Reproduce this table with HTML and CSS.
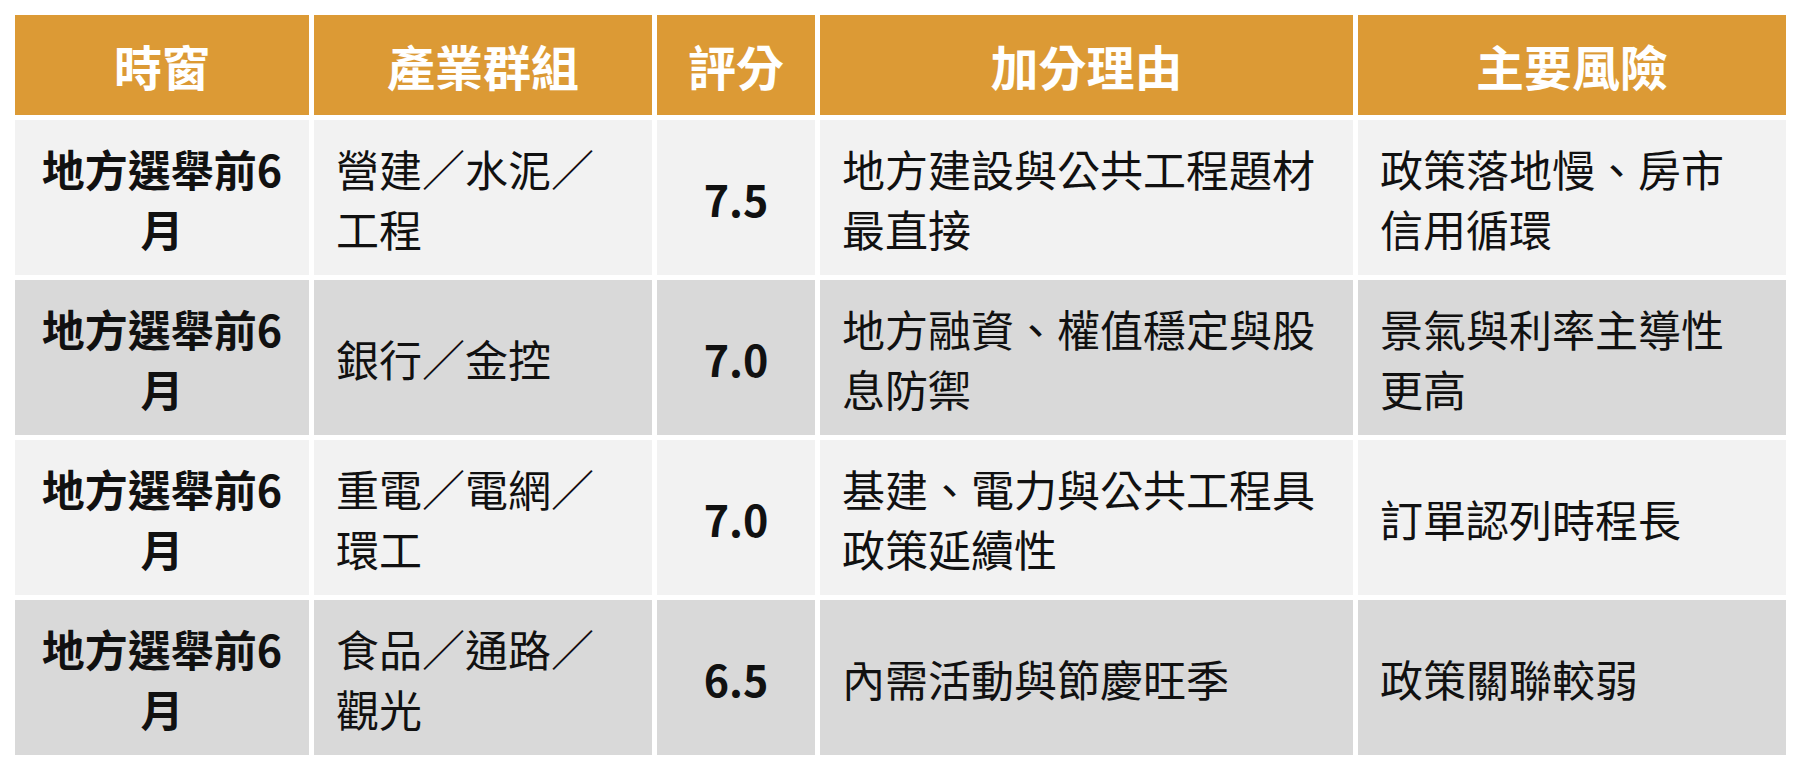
FILE: index.html
```html
<!DOCTYPE html>
<html lang="zh-Hant">
<head>
<meta charset="utf-8">
<link rel="stylesheet" href="styles.css">
</head>
<body>
<table class="grid">
  <colgroup>
    <col class="c1"><col class="c2"><col class="c3"><col class="c4"><col class="c5">
  </colgroup>
  <thead>
    <tr class="head">
      <th>時窗</th><th>產業群組</th><th>評分</th><th>加分理由</th><th>主要風險</th>
    </tr>
  </thead>
  <tbody>
    <tr class="light">
      <td class="win">地方選舉前6月</td>
      <td>營建／水泥／工程</td>
      <td class="score">7.5</td>
      <td>地方建設與公共工程題材最直接</td>
      <td>政策落地慢、房市信用循環</td>
    </tr>
    <tr class="dark">
      <td class="win">地方選舉前6月</td>
      <td>銀行／金控</td>
      <td class="score">7.0</td>
      <td>地方融資、權值穩定與股息防禦</td>
      <td>景氣與利率主導性更高</td>
    </tr>
    <tr class="light">
      <td class="win">地方選舉前6月</td>
      <td>重電／電網／環工</td>
      <td class="score">7.0</td>
      <td>基建、電力與公共工程具政策延續性</td>
      <td>訂單認列時程長</td>
    </tr>
    <tr class="dark">
      <td class="win">地方選舉前6月</td>
      <td>食品／通路／觀光</td>
      <td class="score">6.5</td>
      <td>內需活動與節慶旺季</td>
      <td>政策關聯較弱</td>
    </tr>
  </tbody>
</table>
</body>
</html>
```
FILE: styles.css
```css
html, body {
  margin: 0;
  padding: 0;
  background: #ffffff;
}
body {
  padding: 10px;
  font-family: "Noto Sans CJK TC", "Noto Sans", sans-serif;
  color: #111111;
}
.grid {
  width: 1780px;
  border-collapse: separate;
  border-spacing: 5px;
  table-layout: fixed;
}
.c1 { width: 294px; }
.c2 { width: 338px; }
.c3 { width: 158px; }
.c4 { width: 533px; }
.c5 { width: 428px; }

.head th {
  background: #dc9a35;
  color: #ffffff;
  font-weight: 700;
  font-size: 48px;
  line-height: 60px;
  height: 100px;
  padding: 0 10px;
  text-align: center;
  vertical-align: middle;
  box-sizing: border-box;
}
tbody tr { height: 155px; }
tbody td {
  font-size: 43px;
  line-height: 60px;
  padding: 0 22px;
  vertical-align: middle;
  text-align: left;
  font-weight: 400;
}
.light td { background: #f2f2f2; }
.dark td { background: #d9d9d9; }
tbody td.win {
  font-weight: 700;
  text-align: center;
}
tbody td.score {
  font-weight: 700;
  text-align: center;
}
```
